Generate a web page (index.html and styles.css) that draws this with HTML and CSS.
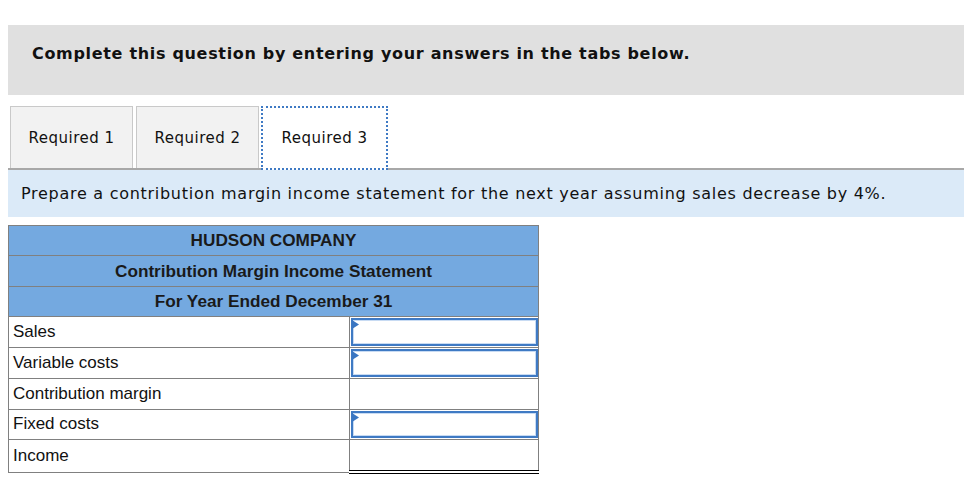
FILE: index.html
```html
<!DOCTYPE html>
<html>
<head>
<meta charset="utf-8">
<link rel="stylesheet" href="styles.css">
</head>
<body>
<div class="page">
  <div class="banner">Complete this question by entering your answers in the tabs below.</div>
  <div class="tabs">
    <div class="tab">Required 1</div>
    <div class="tab">Required 2</div>
    <div class="tab active">Required 3</div>
  </div>
  <div class="prompt">Prepare a contribution margin income statement for the next year assuming sales decrease by 4%.</div>
  <table class="stmt">
    <tr class="head"><td colspan="2">HUDSON COMPANY</td></tr>
    <tr class="head"><td colspan="2">Contribution Margin Income Statement</td></tr>
    <tr class="head"><td colspan="2">For Year Ended December 31</td></tr>
    <tr><td class="label">Sales</td><td class="val"><div class="input"><svg class="flag" width="7" height="10" viewBox="0 0 7 10"><path d="M0 0L7 4.5L0 9Z" fill="#3a76c2"/></svg></div></td></tr>
    <tr><td class="label">Variable costs</td><td class="val"><div class="input"><svg class="flag" width="7" height="10" viewBox="0 0 7 10"><path d="M0 0L7 4.5L0 9Z" fill="#3a76c2"/></svg></div></td></tr>
    <tr><td class="label">Contribution margin</td><td class="val total"></td></tr>
    <tr><td class="label">Fixed costs</td><td class="val"><div class="input"><svg class="flag" width="7" height="10" viewBox="0 0 7 10"><path d="M0 0L7 4.5L0 9Z" fill="#3a76c2"/></svg></div></td></tr>
    <tr><td class="label">Income</td><td class="val total final"></td></tr>
  </table>
</div>
</body>
</html>
```
FILE: styles.css
```css
html, body {
  margin: 0;
  padding: 0;
  background: #fff;
}
.page {
  padding: 25px 0 0 8px;
}
.banner {
  background: #e0e0e0;
  height: 70px;
  box-sizing: border-box;
  padding: 19px 0 0 24px;
  font-family: "DejaVu Sans", Verdana, sans-serif;
  font-weight: bold;
  font-size: 16px;
  letter-spacing: 0.68px;
  color: #111;
}
.tabs {
  margin-top: 11px;
  display: flex;
  gap: 3px;
  padding-left: 2px;
  border-bottom: 2px solid #a8a8a8;
  height: 62px;
}
.tab {
  width: 123px;
  height: 62px;
  box-sizing: border-box;
  padding-top: 1px;
  background: #f2f2f2;
  border: 1px solid #c9c9c9;
  border-bottom: none;
  display: flex;
  align-items: center;
  justify-content: center;
  font-family: "DejaVu Sans", Verdana, sans-serif;
  font-size: 15px;
  letter-spacing: 0.5px;
  color: #111;
}
.tab.active {
  width: 127px;
  height: 64px;
  margin-left: -1px;
  padding-top: 0;
  background: #fff;
  border: 2px dotted #3f7ac4;
  position: relative;
  z-index: 1;
}
.prompt {
  background: #dbeaf8;
  height: 47px;
  box-sizing: border-box;
  padding: 14px 0 0 13px;
  font-family: "DejaVu Sans", Verdana, sans-serif;
  font-size: 16px;
  letter-spacing: 0.72px;
  color: #111;
}
.stmt {
  margin-top: 8px;
  border-collapse: collapse;
  width: 531px;
  font-family: "Liberation Sans", Arial, sans-serif;
  font-size: 17px;
  color: #111;
}
.stmt td {
  border: 1px solid #808080;
  height: 29.8px;
  padding: 0;
}
.stmt .head td {
  height: 29.4px;
  background: #74a9e0;
  text-align: center;
  font-weight: bold;
  font-size: 17.2px;
  color: #1a1a1a;
}
.label {
  width: 336px;
  padding-left: 4px !important;
}
.val {
  width: 188px;
  position: relative;
}
.input {
  position: absolute;
  left: 1px;
  right: 0;
  top: 1px;
  bottom: 1px;
  border: 2px solid #3f7ac4;
  box-shadow: inset 0 0 0 1px #c8dbf3;
}
.flag {
  position: absolute;
  left: -1px;
  top: 0;
  display: block;
}
.stmt td.total {
  border-top: 1px solid #000;
}
.stmt td.final {
  border-bottom: 4px double #000;
}
```
